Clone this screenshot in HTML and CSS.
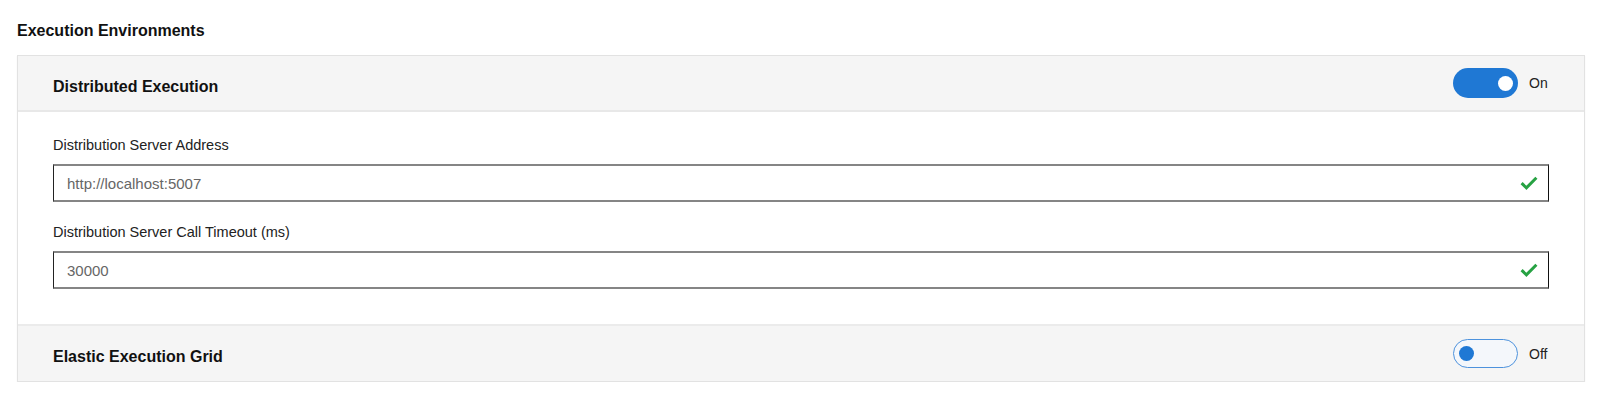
FILE: index.html
```html
<!DOCTYPE html>
<html>
<head>
<meta charset="utf-8">
<link rel="stylesheet" href="styles.css">
</head>
<body>
<div class="page">
  <h2 class="page-title">Execution Environments</h2>
  <div class="card">
    <div class="section-header">
      <div class="section-title">Distributed Execution</div>
      <div class="switch-wrap">
        <span class="switch switch-on"><span class="knob"></span></span>
        <span class="switch-label">On</span>
      </div>
    </div>
    <div class="section-body">
      <div class="field">
        <label class="field-label">Distribution Server Address</label>
        <div class="input">
          <span class="input-value">http://localhost:5007</span>
          <svg class="check" width="18" height="14" viewBox="0 0 18 14"><path d="M1.6 7.2 L6.4 11.8 L16.4 1.8" fill="none" stroke="#27a243" stroke-width="3"/></svg>
        </div>
      </div>
      <div class="field">
        <label class="field-label">Distribution Server Call Timeout (ms)</label>
        <div class="input">
          <span class="input-value">30000</span>
          <svg class="check" width="18" height="14" viewBox="0 0 18 14"><path d="M1.6 7.2 L6.4 11.8 L16.4 1.8" fill="none" stroke="#27a243" stroke-width="3"/></svg>
        </div>
      </div>
    </div>
    <div class="section-header section-header-last">
      <div class="section-title">Elastic Execution Grid</div>
      <div class="switch-wrap">
        <span class="switch switch-off"><span class="knob"></span></span>
        <span class="switch-label">Off</span>
      </div>
    </div>
  </div>
</div>
</body>
</html>
```
FILE: styles.css
```css
* { box-sizing: border-box; }
html, body { margin: 0; padding: 0; background: #fff; }
body {
  font-family: "Liberation Sans", Arial, sans-serif;
  color: #111;
}
.page {
  padding: 22px 16px 0 17px;
}
.page-title {
  margin: 0 0 15px 0;
  font-size: 16px;
  line-height: 18px;
  font-weight: bold;
  color: #111;
}
.card {
  border: 1px solid #e2e2e2;
  background: #fff;
  box-shadow: 0 1px 1px rgba(0,0,0,0.07);
}
.section-header {
  height: 56px;
  background: #f5f5f5;
  border-bottom: 2px solid #e8e8e8;
  display: flex;
  align-items: center;
  justify-content: space-between;
  padding: 0 35px;
}
.section-header-last {
  height: 57px;
  border-bottom: none;
  border-top: 2px solid #ebebeb;
}
.section-title {
  font-size: 16px;
  font-weight: bold;
  line-height: 18px;
  padding-top: 7px;
  color: #111;
}
.switch-wrap {
  display: flex;
  align-items: center;
  gap: 11px;
}
.switch {
  width: 65px;
  height: 30px;
  border-radius: 15px;
  display: flex;
  align-items: center;
}
.switch-on {
  background: #1f78d4;
  justify-content: flex-end;
  padding-right: 5px;
}
.switch-on .knob {
  background: #fff;
}
.switch-off {
  height: 29px;
  background: #f4f7fb;
  border: 1px solid #4d92dd;
  justify-content: flex-start;
  padding-left: 5px;
}
.switch-off .knob {
  background: #1f78d4;
}
.knob {
  width: 15px;
  height: 15px;
  border-radius: 50%;
  display: block;
}
.switch-label {
  font-size: 14px;
  line-height: 16px;
  color: #222;
  min-width: 20px;
}
.section-body {
  padding: 25px 35px 35px 35px;
}
.field + .field {
  margin-top: 22px;
}
.field-label {
  display: block;
  font-size: 14.5px;
  line-height: 17px;
  color: #222;
  margin-bottom: 10px;
}
.input {
  height: 38px;
  border-top: 2px solid #858585;
  border-bottom: 2px solid #858585;
  border-left: 1px solid #222;
  border-right: 1px solid #111;
  display: flex;
  align-items: center;
  justify-content: space-between;
  padding: 0 10px 0 13px;
}
.input-value {
  font-size: 15px;
  color: #666;
}
.check {
  display: block;
}
```
